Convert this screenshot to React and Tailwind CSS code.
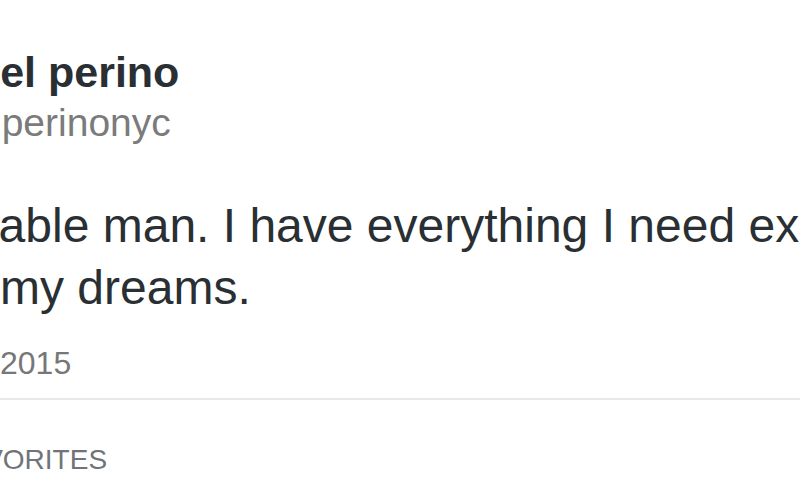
import React from 'react';

const tweet = {
  name: 'Daniel perino',
  handle: '@danielperinonyc',
  lines: ["I'm a reasonable man. I have everything I need except the woman of", 'my dreams.'],
  date: '2015',
};

const App = () => {
  return (
    <div className="w-[800px] h-[503px] overflow-hidden bg-white font-['Liberation_Sans',Arial,sans-serif]">
      {/* Header: name and handle, cropped at the left edge */}
      <div className="pt-[48px] whitespace-nowrap">
        <p className="ml-[-93px] text-[43px] leading-[48px] font-bold text-[#292f33]">{tweet.name}</p>
        <p className="ml-[-142px] mt-[5px] text-[39px] leading-[44px] text-[#7b7b7b]">{tweet.handle}</p>
      </div>

      {/* Tweet text */}
      <div className="mt-[50px] whitespace-nowrap text-[48px] leading-[62px] text-[#292f33]">
        <p className="ml-[-264px]">{tweet.lines[0]}</p>
        <p>{tweet.lines[1]}</p>
      </div>

      {/* Date */}
      <p className="mt-[26px] text-[32px] leading-[36px] text-[#777777]">{tweet.date}</p>

      <div className="mt-[17px] h-[2px] bg-[#e6e8ea]" />

      {/* Stats */}
      <p className="mt-[44px] ml-[-48px] whitespace-nowrap text-[28px] leading-[32px] text-[#707478]">FAVORITES</p>
    </div>
  );
};

export default App;
